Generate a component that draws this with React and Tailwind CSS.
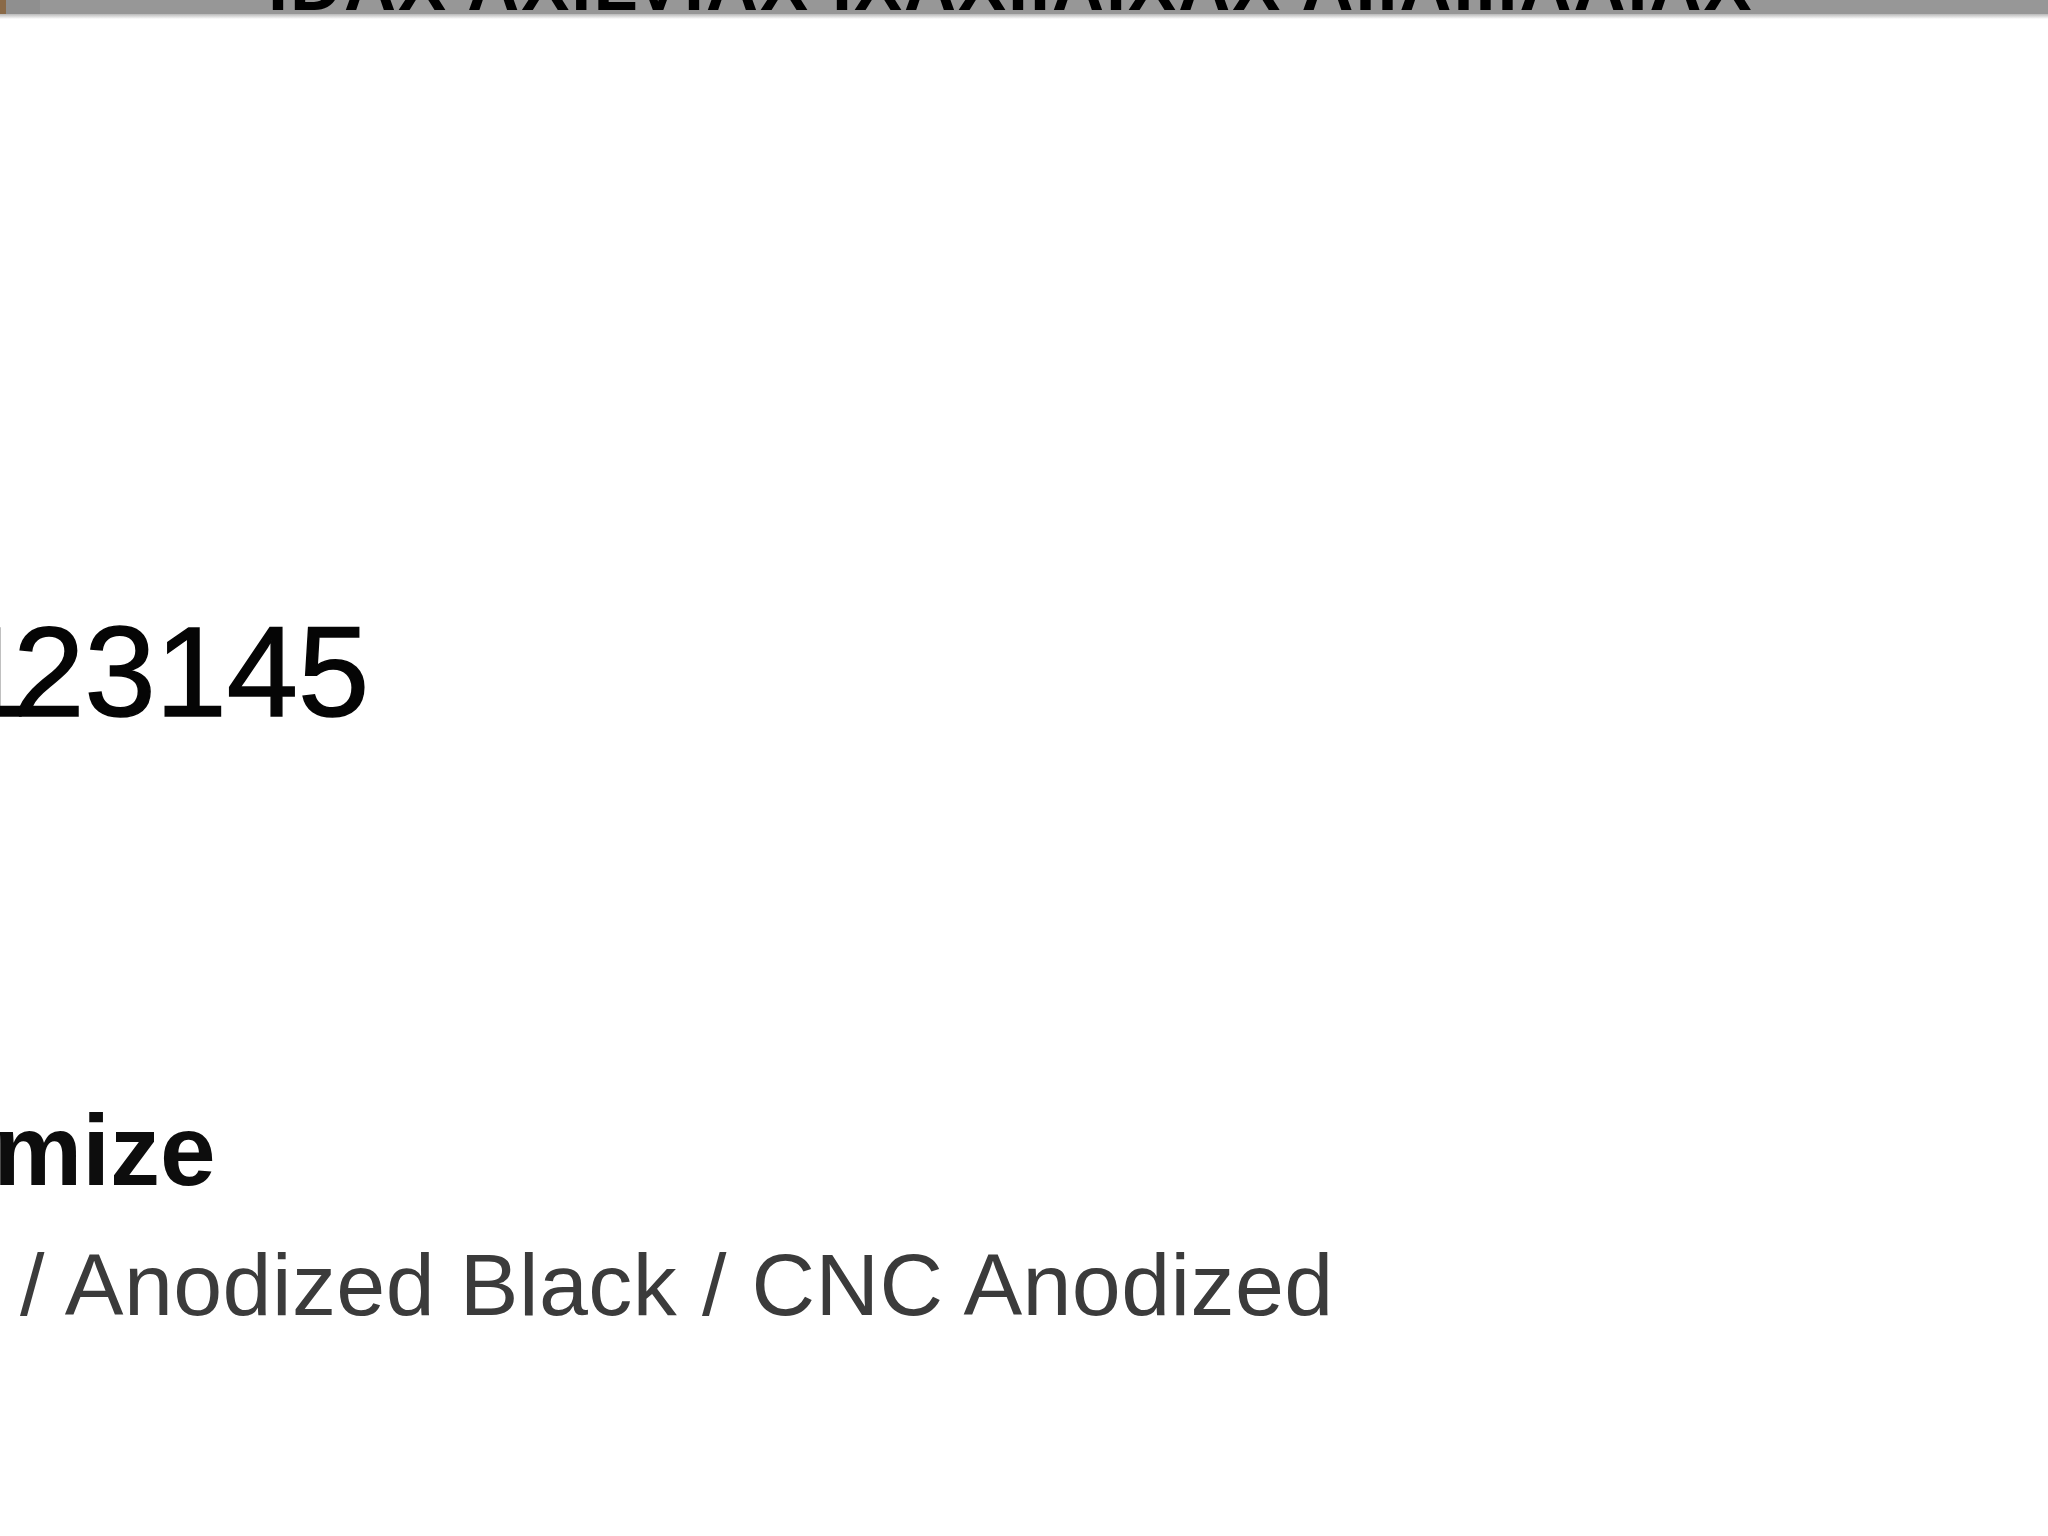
import React from "react";

const sans = { fontFamily: '"Liberation Sans", Arial, sans-serif' };

function TopBanner() {
  return (
    <div className="relative">
      <div className="flex h-[14px] overflow-hidden bg-[#979797]">
        {/* left edge of the banner frame */}
        <div className="w-[6px] shrink-0 bg-[#8a6a48]" />
        <div className="w-[34px] shrink-0 bg-[#8f8f8f]" />
        <div className="-mt-[51px] ml-[228px] whitespace-nowrap text-[72px] font-bold leading-none tracking-[2px] text-black">
          IDAX AXILVIAX IXAXIIAIXAX AIIAIIIAAIAX
        </div>
      </div>
      <div className="h-[5px] bg-gradient-to-b from-[#b9b9b9] to-white" />
    </div>
  );
}

function OrderNumber() {
  return (
    <div className="mt-[589px] overflow-hidden">
      <div className="-ml-[44px] whitespace-nowrap text-[128px] leading-none text-[#050505] [-webkit-text-stroke:1.5px_#050505]">
        <span className="tracking-[-14px]">1</span>
        <span>23145</span>
      </div>
    </div>
  );
}

function ProductTitle() {
  return (
    <div className="mt-[364px] overflow-hidden">
      <h2 className="-ml-[290px] whitespace-nowrap text-[100px] font-bold leading-none text-[#0d0d0d]">
        Customize
      </h2>
      <p className="mt-[41px] whitespace-nowrap pl-[20px] text-[88px] leading-none tracking-[0.4px] text-[#3b3b3b]">
        / Anodized Black / CNC Anodized
      </p>
    </div>
  );
}

export default function App() {
  return (
    <div className="h-[1536px] w-full overflow-hidden bg-white" style={sans}>
      <TopBanner />
      <OrderNumber />
      <ProductTitle />
    </div>
  );
}
